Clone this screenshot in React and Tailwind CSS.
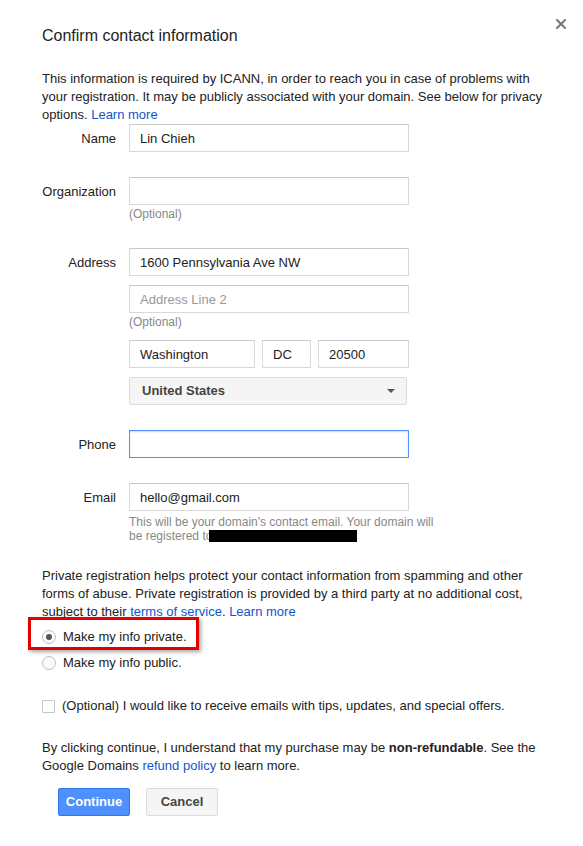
import React from 'react';

const font = { fontFamily: '"Liberation Sans", Arial, sans-serif' };

function TextInput({ value, placeholder, focused, className = 'w-[280px]' }) {
  return (
    <div
      className={`${className} h-[28px] shrink-0 border bg-white pl-[10px] pt-[1px] text-[13px] leading-[25px] ${
        focused
          ? 'border-[#4d90fe] shadow-[inset_0_1px_2px_rgba(0,0,0,0.15)]'
          : 'border-[#d9d9d9] border-t-[#c8c8c8]'
      }`}
    >
      {value ? (
        <span className="text-[#222]">{value}</span>
      ) : (
        <span className="text-[#999]">{placeholder}</span>
      )}
    </div>
  );
}

function Optional() {
  return <div className="relative top-[1px] text-[12px] leading-[16px] text-[#888]">(Optional)</div>;
}

function Row({ label, children, className = '' }) {
  return (
    <div className={`flex gap-[13px] ${className}`}>
      <div className="relative top-[1px] h-[28px] w-[74px] shrink-0 text-right leading-[28px] text-[#222]">
        {label}
      </div>
      <div className="flex flex-col">{children}</div>
    </div>
  );
}

function Radio({ checked }) {
  return (
    <span className="flex h-[14px] w-[14px] shrink-0 items-center justify-center rounded-full border border-[#c0c0c0] bg-[#fafafa]">
      {checked && <span className="h-[6px] w-[6px] rounded-full bg-[#555]" />}
    </span>
  );
}

export default function App() {
  return (
    <div className="min-h-[846px] w-full bg-white text-[13px] text-[#222]" style={font}>
      <div className="relative px-[42px]">
        {/* close */}
        <button className="absolute right-[17px] top-[19px] flex h-[10px] w-[10px] items-center justify-center">
          <svg width="10" height="10" viewBox="0 0 10 10">
            <path d="M1 1L9 9M9 1L1 9" stroke="#777" strokeWidth="2" strokeLinecap="square" />
          </svg>
        </button>

        <h2 className="pt-[26px] text-[16px] leading-[20px] font-normal text-[#222]">
          Confirm contact information
        </h2>

        <p className="mt-[24px] w-[506px] leading-[18px]">
          This information is required by ICANN, in order to reach you in case of problems with your
          registration. It may be publicly associated with your domain. See below for privacy options.{' '}
          <a className="text-[#15c]">Learn more</a>
        </p>

        <Row label="Name">
          <TextInput value="Lin Chieh" />
        </Row>

        <Row label="Organization" className="mt-[25px]">
          <TextInput />
          <Optional />
        </Row>

        <Row label="Address" className="mt-[27px]">
          <TextInput value="1600 Pennsylvania Ave NW" />
          <TextInput placeholder="Address Line 2" className="mt-[9px] w-[280px]" />
          <Optional />
          <div className="mt-[11px] flex gap-[7px]">
            <TextInput value="Washington" className="w-[126px]" />
            <TextInput value="DC" className="w-[49px]" />
            <TextInput value="20500" className="w-[91px]" />
          </div>
          <div className="mt-[9px] flex h-[28px] w-[278px] items-center justify-between rounded-[2px] border border-[#dcdcdc] bg-[#f5f5f5] pl-[12px] pr-[11px]">
            <span className="text-[13px] font-bold text-[#444]">United States</span>
            <svg width="8" height="4" viewBox="0 0 8 4">
              <path d="M0 0H8L4 4Z" fill="#555" />
            </svg>
          </div>
        </Row>

        <Row label="Phone" className="mt-[25px]">
          <TextInput focused />
        </Row>

        <Row label="Email" className="mt-[25px]">
          <TextInput value="hello@gmail.com" />
          <div className="mt-[4px] w-[310px] text-[12px] leading-[14px] text-[#888]">
            This will be your domain's contact email. Your domain will be registered to
            <span className="ml-[-3px] inline-block h-[12px] w-[148px] bg-black align-[-2px]" />
          </div>
        </Row>

        <p className="mt-[24px] w-[506px] leading-[18px]">
          Private registration helps protect your contact information from spamming and other forms of
          abuse. Private registration is provided by a third party at no additional cost, subject to
          their <a className="text-[#15c]">terms of service</a>. <a className="text-[#15c]">Learn more</a>
        </p>

        <div className="relative mt-[3px] flex h-[26px] items-center gap-[7px]">
          <Radio checked />
          <span>Make my info private.</span>
          <div className="pointer-events-none absolute left-[-14px] top-[-7px] h-[33px] w-[171px] border-[3px] border-[#e50000] shadow-[2px_2px_4px_rgba(0,0,0,0.35)]" />
        </div>
        <div className="flex h-[26px] items-center gap-[7px]">
          <Radio />
          <span>Make my info public.</span>
        </div>

        <div className="mt-[17px] flex h-[26px] items-center gap-[7px]">
          <span className="h-[13px] w-[13px] shrink-0 rounded-[1px] border border-[#c6c6c6] bg-white" />
          <span>(Optional) I would like to receive emails with tips, updates, and special offers.</span>
        </div>

        <p className="mt-[20px] w-[506px] leading-[18px]">
          By clicking continue, I understand that my purchase may be <b>non-refundable</b>. See the Google
          Domains <a className="text-[#15c]">refund policy</a> to learn more.
        </p>

        <div className="ml-[16px] mt-[13px] flex gap-[16px]">
          <button className="h-[28px] w-[72px] rounded-[2px] border border-[#3079ed] bg-[#4d90fe] text-[13px] font-bold text-white">
            Continue
          </button>
          <button className="h-[28px] w-[72px] rounded-[2px] border border-[#dcdcdc] bg-[#f5f5f5] text-[13px] font-bold text-[#444]">
            Cancel
          </button>
        </div>
      </div>
    </div>
  );
}
